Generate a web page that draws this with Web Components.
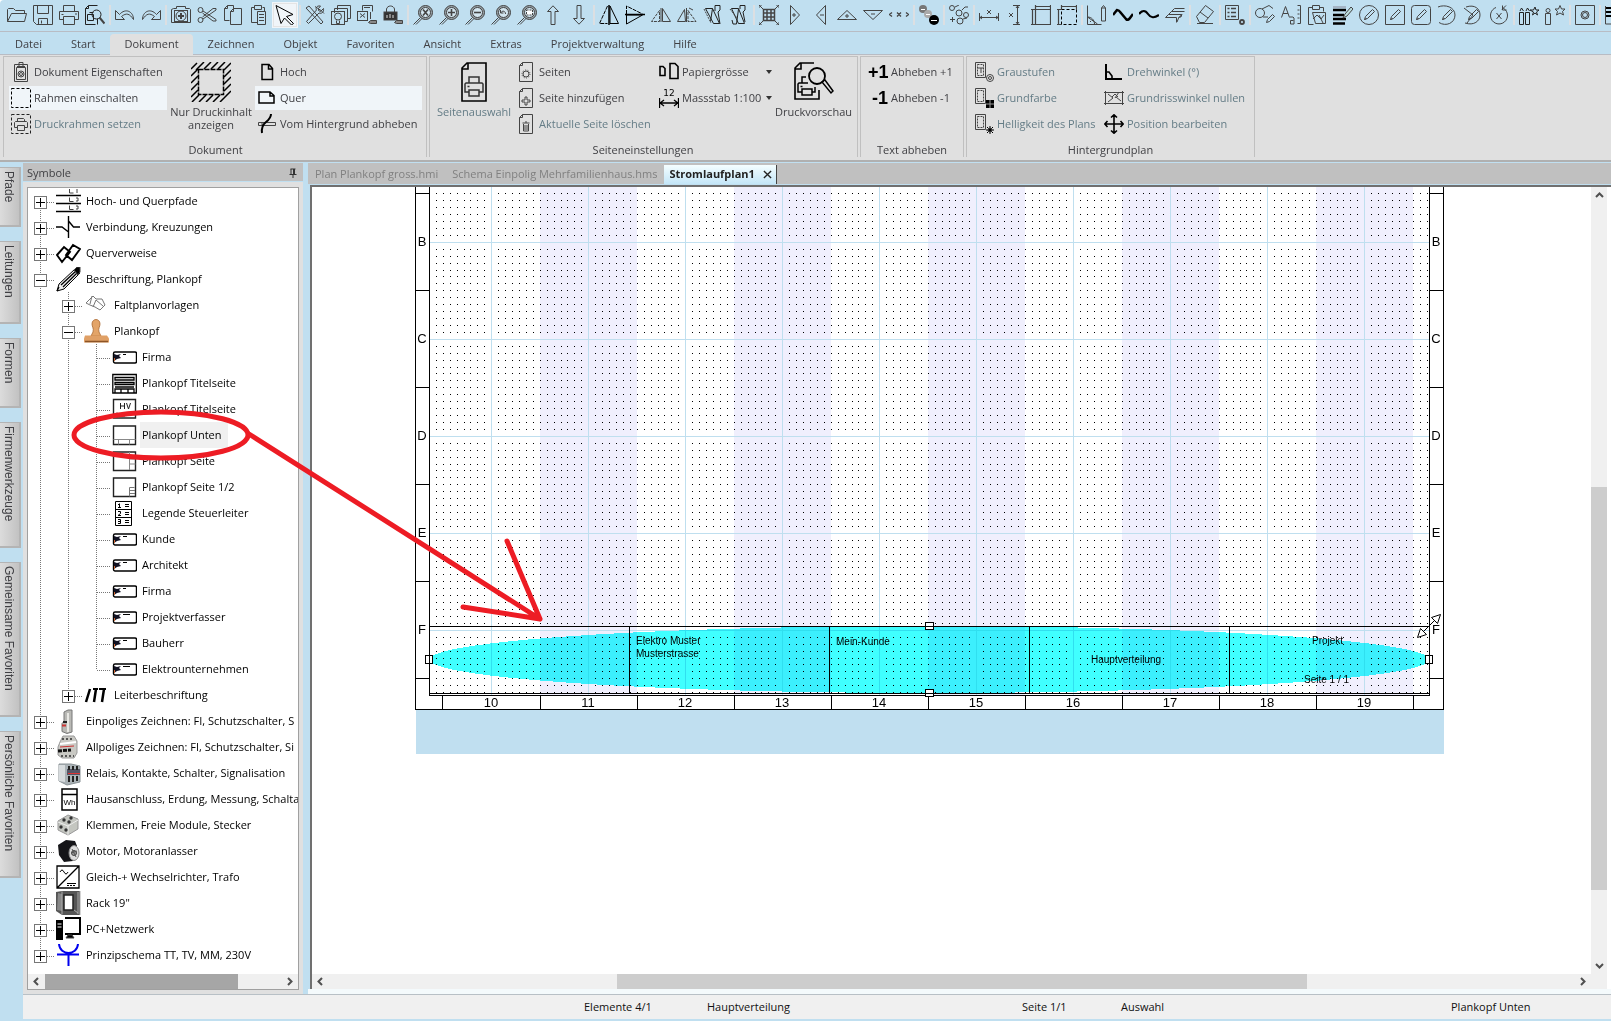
<!DOCTYPE html>
<html lang="de">
<head>
<meta charset="utf-8">
<title>Stromlaufplan1</title>
<style>
html,body{margin:0;height:100%;overflow:hidden;background:#fff}
body{font:11px/14px "Open Sans","Noto Sans",sans-serif;color:#404044;
--sky:#c0dff0;--panel:#e0e0e0;--bar:#c0c0c0;--line:#b8bcc4}
</style>
</head>
<body>
<cad-app></cad-app>
<script>
const define=(name,render)=>customElements.define(name,class extends HTMLElement{
  connectedCallback(){
    if(this.shadowRoot)return;
    this.attachShadow({mode:'open'}).innerHTML=render(this);
  }
});
const RESET='*{box-sizing:border-box}button{font:inherit;color:inherit;background:none;border:0;padding:0;margin:0;text-align:left}';

/* ---------- icon library: 20 x 20 unless a view box is given ---------- */
const mag='<circle cx="12.500" cy="7.500" r="7" fill="#98a2a8"/><circle cx="12.500" cy="7.500" r="5" fill="#d3e6f0"/><path d="M7.500 12.500L.5 19.500M9 13.500l-6 6"/>';
const miniDoc='<path d="M1.500.5h10v15h-10z"/><path d="M3.500 2.500h6v11h-6z" stroke-dasharray="2 1"/>';
const pen='<path d="M5.500 14.500l1-3 7-7 2 2-7 7zM5.500 14.500l2-1"/>';
const page='<path d="M6.500 .5h10v19h-13v-16zM3.500 3.500h3v-3"/>';
const card=w=>`<rect x="1.500" y="7" width="23" height="11" rx="1.500" stroke="#000" stroke-width="1.400"/><path d="M2 9l3 1 4-1-2 2 2 2-4 1-3 2z" fill="#112" stroke="none"/><path d="M2.500 13v3" stroke="#c63"/><path d="M11 9.500h${w}" stroke="#000"/>`;
const ICONS={
open:'<path d="M.5 16.500v-12l1-1h5l2 2h9v3M.5 16.500l4-8h15l-2 8z"/>',
save:'<path d="M.5.5h19v19h-16l-3-3zM4.500.5v8h11v-8M5.500 19.500v-6h9v6M8.500 15.500v3"/>',
print:'<path d="M4.500 6.500v-6h11v6M4.500 14.500h-4v-8h19v8h-4M4.500 11.500h11v8h-11zM2.500 9.500h2M16 9h2"/>',
preview:'<path d="M10.500 19.500h-10v-16l3-3h9M.5 3.500h3v-3M12.500 14v5.500M2.500 9.500h6v6h-6zM4.500 7.500h4" stroke="#222"/><circle cx="11.500" cy="9.500" r="4.500" stroke="#222"/><path d="M14.500 12.500l5 6" stroke-width="2"/>',
undo:'<path d="M.5 5.500v9h9l-3-3c5-4 8-3 12 3 0-8-8-12-14-5z"/>',
redo:'<path d="M19.500 5.500v9h-9l3-3c-5-4-8-3-12 3 0-8 8-12 14-5z"/>',
shot:'<path d="M.5 4.500l2-1h3v-2h9v2h4l1 1v13h-19z"/><rect x="3.500" y="5.500" width="13" height="11"/><circle cx="10" cy="11" r="5"/><path d="M10 8v6M7 11h6" stroke-width="2"/>',
cut:'<circle cx="3.500" cy="5" r="2.500"/><circle cx="3.500" cy="15" r="2.500"/><path d="M6 6l13 8.500v1.500h-3L5.500 8M6 14l13-9v-1.500h-3L5.500 12"/>',
copy:'<path d="M6.500 15.500h-5v-12l3-3h6v3M1.500 3.500h3v-3M7.500 6.500l3-3h8v16h-11zM7.500 6.500h3v-3"/>',
paste:'<path d="M8.500 17.500h-6v-15h3M13.500 2.500h2v4M5.500.5h7v4h-7zM8.500 6.500h8v13h-8zM10 9.500h5M10 12.500h5M10 15.500h5"/>',
pointer:'<path d="M1 .5l17 9-6.500 2 7 7-2 1.500-7-7L6 18.500z" stroke="#000"/>',
tools:'<path d="M1 3l3-2 14 16-2 2zM18.500 3.500l-3 3-2-1 0-2 2-2.500c-4-.5-5 2-4 4L1.500 16.500l2 2L14 8c3 1 5-1 4.500-4.500zM10 1.500l6 4 3 3" />',
layers:'<path d="M6.500 5v-4.500h13v13h-3M3.500 8v-4.500h13v13h-3"/><rect x=".5" y="6.500" width="13" height="13"/><circle cx="7" cy="11.500" r="3.500"/><path d="M5.500 15.500v3h3v-3"/>',
save2:'<path d="M5.500 5.500v-5h10v6M7 2.500h6"/><rect x=".5" y="6.500" width="10" height="9"/><path d="M3 12.500l5-4M3 8.500l5 4M13.500 7v7"/><path d="M11.500 17.500l2-2h6v3h-6z" fill="#888"/>',
lock:'<path d="M3.500 7v-3c1-4 7-4 8 0v3" /><rect x="1" y="7" width="13" height="8" fill="#333"/><path d="M4 10v3M7 9v4M10 10v3" stroke="#ddd"/><path d="M11.500 17.500l2-2h6v3h-6z" fill="#888"/>',
zx:mag+'<path d="M10 4.500l5 6M15 4.500l-5 6" stroke-width="1.600"/>',
zp:mag+'<path d="M12.500 4v7M9 7.500h7" stroke-width="1.600"/>',
zm:mag+'<path d="M9 7.500h7" stroke-width="1.600"/>',
zu:mag+'<path d="M9.500 5v3h3M9.500 8c2-3 5-2 5 1"/>',
zd:mag+'<rect x="9.500" y="5" width="6" height="5" fill="#fff" stroke-dasharray="2 1"/>',
up:'<path d="M10 .8l5.500 5.700h-3.500v13h-4v-13H4.500z"/>',
down:'<path d="M10 19.200l5.500-5.700h-3.500v-13h-4v13H4.500z"/>',
flipH:'<path d="M8.500 1L.5 18.500h8" stroke="#000" stroke-dasharray="4 1"/><path d="M11 1l8.500 17.500H11z" stroke="#000"/><path d="M10 0v20" stroke="#000" stroke-width="1.500"/>',
flipV:'<path d="M1.500 9V1l16 8" stroke="#000" stroke-dasharray="4 1"/><path d="M1.500 10v9l16-9z" stroke="#000"/><path d="M0 9.500h20" stroke="#000" stroke-width="1.500"/>',
fl2:'<path d="M8.500 5.500l-8 11h8z" stroke-dasharray="3 1"/><path d="M11.500 3.500l8 13h-8zM10 3v14"/>',
fl3:'<path d="M7.500 4.500l-7 12h8z"/><path d="M11 5.500l8 11h-8z" stroke-dasharray="3 1"/><path d="M9.500 3v14M12 3l4 2"/>',
fl4:'<path d="M2.500 3.500h7l7 15h-6zM9.500 3.500l-2 13M12 6V.5h5V5l-2 2 2 12" stroke="#222"/><path d="M1 4l7 14" stroke-dasharray="2 1"/>',
fl5:'<path d="M2.500 3.500h7l6 15h-6zM11 4V.5h5V5l-2 2 2 10M9.500 4l-2 15H4l-1-4" stroke="#222"/><path d="M1 4l7 9" stroke-dasharray="2 1"/>',
array:'<path d="M0 0l4 4M20 0l-4 4M0 20l4-4M20 20l-4-4M0 3V0h3M17 0h3v3M0 17v3h3M17 20h3v-3"/><path d="M4.500 4.500h11v11h-11zM8 4.500v11M12 4.500v11M4.500 8h11M4.500 12h11" stroke-width="1.500"/>',
tr:'<path d="M5.500.5l9 9.500-9 9.500zM7 10h4M9 8v4"/>',
tl:'<path d="M14.500.5l-9 9.500 9 9.500zM9 10h4"/>',
tu:'<path d="M.5 14.500l9.500-9 9.500 9zM8 11h4M10 9v4"/>',
td:'<path d="M.5 5.500l9.500 9 9.500-9zM8 9h4"/>',
xx:'<path d="M3 7.500L.5 9.500 3 11.500M17 7.500l2.500 2-2.500 2M8 7.500l4 4M12 7.500l-4 4" stroke-width="1.300"/>',
balls:'<g stroke="none"><circle cx="4" cy="4" r="4" fill="#777"/><circle cx="9" cy="9" r="4" fill="#aaa"/><circle cx="15" cy="15" r="5" fill="#000"/></g><path d="M12 15.500h6M2 4.500h4M7 9.500h4" stroke="#fff"/>',
nodes:'<circle cx="3" cy="3" r="2.500"/><circle cx="10" cy="8" r="3"/><circle cx="17" cy="10" r="2.500"/><circle cx="11" cy="16" r="3"/><path d="M6 2l4-2M13 5l3-3h3M1 14.500h5M3.500 12v5M14 14l4-1"/>',
dimH:'<path d="M.5 8v8M19.500 8v8M1 12.500h18M3 11l-2 1.500L3 14M17 11l2 1.500L17 14M8 5l4 4M12 5L8 9"/>',
dimV:'<path d="M8 .5h7M8 19.500h7M12.500 1v18M11 3l1.500-2L14 3M11 17l1.500 2L14 17M4 8l4 4M8 8l-4 4"/>',
dimBox:'<path d="M4.500 4.500h15v15h-15zM4.500 1.500h15M1.500 4.500v15M0 4.500h5M0 19.500h5M4.500 0v5M19.500 0v5" stroke-width="1.200"/>',
dimBox2:'<path d="M4.500 4.500h15v15h-15z" stroke="#000" stroke-dasharray="3 2"/><path d="M4.500 1.500h15M1.500 4.500v15M0 4.500h5M0 19.500h5M4.500 0v5M19.500 0v5" stroke-width="1.200"/>',
angle:'<path d="M.5.5v19h14M.5 12c4 0 7 3 7 7M.5 12l10 7M3 16.500h1M14.500 3l2-2.500 2 2.500v13h-4zM14.500 3h4"/>',
wave:'<path d="M0 10l4-5q2 0 4 3l5 6q2 2 4-1l3-4" stroke="#000" stroke-width="2.500"/>',
wave2:'<path d="M0 9q5-6 9 0t11 1" stroke="#000" stroke-width="2.200"/>',
offset:'<path d="M.5 12.500l3-3M3.500 9.500h13M.5 12.500h11v5M3.500 9.500l3-3h13M6.500 6.500l3-3h10M12 17l2-5h2l1-3M14.500 12.500l2-3"/>',
erase:'<path d="M1.500 11.500l9-11 8 6-9 11h-5zM5 7l8 6M2 18.500h16"/>',
list:'<path d="M.5.5h13v14h-13z"/><path d="M2.500 3.500h2M6 3.500h5M2.500 7.500h2M6 7.500h5M2.500 11.500h2M6 11.500h5" stroke-width="1.500"/><circle cx="17" cy="17" r="2" stroke-width="1.800"/>',
shapes:'<circle cx="5" cy="8" r="4.500"/><path d="M7 4l7-3.500 4 3M8 12h5M11.500 17.500l1-3 5-5 2 2-5 5z"/>',
type:'<path d="M.5 12.500l4-11 4 11M2 8.500h5M9 12h3l1 1v6h-3.500v-3.500h3M16.500.5h3v18h-3M16.500 5h2M16.500 9h2M16.500 13h2"/>',
clip:'<path d="M6.500 19.500h-5v-17h4M12.500 2.500h4v4M5.500.5h7v4h-7zM5.500 7.500h13v11h-10zM6 14l4-4 4 4 3-4M12 10l4 8"/>',
hatch:'<path d="M0 2h13" stroke="#889"/><path d="M0 5h13M0 10h11M0 14h13M0 18.500h12" stroke="#000" stroke-width="2.500"/><path d="M10 13l2-4 6-7 2 2-6 7z" fill="#bdd"/>',
pc:'<circle cx="10" cy="10" r="9.500"/>'+pen,
ps:'<path d="M.5.5h19v19H.5z"/>'+pen,
pr:'<rect x=".5" y=".5" width="19" height="19" rx="3"/>'+pen,
pa:'<path d="M1 2c7-3 17 0 17 8s-9 12-16 7.500"/>'+pen,
pp:'<path d="M3 2c9-3 14 2 14 8s-6 11-15 8M1 3l9 7-6 8"/>'+pen,
rot:'<path d="M7 2.500a8.500 8.500 0 1 0 6 0M13 4.500l4-4M13.500 .5v4.500h4M7.500 8l5 6M12.500 8l-5 6"/>',
fav1:'<path d="M.5 7.500h4v12h-4zM6.500 7.500h4v12h-4zM1 6l1.500-3L4.500 6M7 6l1.500-3L10.500 6M16 2l1 3h3l-2.500 2 1 3-2.500-2-2.500 2 1-3L11 5h3.500z" stroke="#222"/>',
fav2:'<path d="M.5 8.500h5v11h-5zM15 .5l1.500 3.500H20l-2.500 2.500 1 3.500-3.500-2-3.500 2 1-3.500L10 4h3.500z"/><circle cx="3" cy="5.500" r="2"/>',
gear:'<path d="M.5.5h19v19H.5z"/><circle cx="10" cy="10" r="4"/><circle cx="10" cy="10" r="2.500"/>',
more:'<path d="M.5 3h19M.5 7h19M.5 11h19" stroke="#000" stroke-width="2"/><path d="M.5 1v18h19"/>',
/* ribbon */
props:'<path d="M3.500 2.500h13v17h-13zM8 4.500V.5h4v4zM6 4.500h8"/><path d="M5.500 5.500h9v12h-9z"/><circle cx="10" cy="12" r="3"/><circle cx="10" cy="12" r="1.500"/>',
frame:'<path d="M.5.5h19v19H.5z" stroke="#000" stroke-dasharray="3 2"/>',
frameP:'<path d="M.5.5h19v19H.5z" stroke="#222" stroke-dasharray="3 2"/><path d="M6.500 8V4.500h6l1 1V8M6.500 13.500h-3V8.500l1-1h11l1 1v5h-3M6.500 11.500h7v5h-7z"/>',
content:['0 0 40 40','<path d="M7.500 7.500h25v25h-25z" stroke="#000" stroke-width="1.500" stroke-dasharray="5 1"/><path d="M0 7l6-6M5 8l8-8M13 7l7-7M20 7l7-7M27 7l7-7M33 8l7-7M33 15l7-7M33 22l7-7M33 29l7-7M33 36l7-7M0 14l7-7M0 21l7-7M0 28l7-7M0 35l7-7M1 40l7-7M8 40l7-7M15 40l7-7M22 40l7-7M29 40l7-7" stroke="#000" stroke-width="1.500"/>'],
portrait:'<path d="M5 2.500h7l3.500 4v11H5zM11.500 3v4h4" stroke="#000" stroke-width="1.500"/>',
land:'<path d="M2 4h11l4 3.500V15H2zM13 4v4h4" stroke="#000" stroke-width="1.500"/>',
lift:'<path d="M1.500 8.500h17v3h-17zM5 8.500v3"/><path d="M14 0q0 4-5 8T5 19" stroke="#000" stroke-width="2"/>',
pagesel:['0 0 26 40','<path d="M6 1h19v38H1V6zM1 7h6V1" stroke="#000" stroke-width="1.600"/><path d="M8 21v-6h10v6M8 30H4v-8l1-1h16l1 1v8h-4M8 28h10v6H8zM6.500 24.500h2" stroke-width="1.500" stroke="#333"/>'],
pgGear:page+'<circle cx="10" cy="12" r="3"/><circle cx="10" cy="12" r="4" stroke-dasharray="1 1.500"/>',
pgPlus:page+'<path d="M9 9h2v3h3v2h-3v3H9v-3H6v-2h3z"/>',
pgDel:page+'<path d="M6.500 9h7M9 8h2M7.500 10v7h5v-7M9 11v5M11 11v5"/>',
paper:'<path d="M1 4.500h3l2 2v7H1zM11 1.500h5l3 3v12h-8z" stroke="#000" stroke-width="1.600"/>',
preview2:['0 0 40 40','<path d="M20 1H6L1 6v31h24V28M1 7h6V1" stroke="#000" stroke-width="1.600"/><path d="M12 15H8v6M8 30H4v-8l1-1h9M8 27h10v6H8zM18 30h3v-5M6.500 24.500h2" stroke="#000" stroke-width="1.500"/><circle cx="23" cy="14" r="8" stroke="#000" stroke-width="1.800"/><path d="M28 20l3-2 8 11-2 2z" stroke="#000" stroke-width="1.500"/>'],
gray:miniDoc+'<path d="M3.500 6h6M7 6v5"/><circle cx="16" cy="16" r="3.500"/><circle cx="16" cy="16" r="1.500"/>',
color:miniDoc+'<path d="M12 12h8v8h-8z" fill="#000" stroke="none"/><path d="M12 16h8M16 12v8" stroke="#999"/>',
bright:miniDoc+'<path d="M16 12v8M12 16h8M13 13l6 6M19 13l-6 6" stroke="#000"/><circle cx="16" cy="16" r="2" fill="#000"/>',
rotang:'<path d="M2 2v15h16" stroke="#000" stroke-width="2"/><path d="M3 10h2l3 4v3" stroke="#000" stroke-width="1.600"/>',
ground:'<path d="M0 4.500h20M0 15.500h20M1.500 3v14M18.500 3v14M4 6l5 4-5 4M8 9l3-3 3 3M12 9l5 4M15 4l-4 6"/>',
move:'<path d="M10 1v18M1 10h18M7 3.500L10 .8l3 2.700M7 16.500l3 2.700 3-2.700M3.500 7L.8 10l2.700 3M16.500 7l2.700 3-2.700 3" stroke="#000" stroke-width="1.600"/>',
pin:['0 0 8 10','<path d="M1.500 1h5M2 1v5M5.500 1v5M4.500 1v5M.5 6.500h7M4 6v4" stroke="#333"/>'],
/* symbol tree, 25 x 25 */
t_path:['0 0 25 25','<path d="M0 6.500h25M0 14.500h25M0 22.500h25" stroke="#000" stroke-width="1.500"/><path d="M13.500 0v4h4M13.500 8.500v4h4M13.500 16.500v4h4M21 0v4M20 9h2v3h-2M20 17h2v3h-2" stroke="#444"/>'],
t_cross:['0 0 25 25','<path d="M12.500 1v22M0 12h6l6.500 5M12.500 6l5 6H24" stroke="#000" stroke-width="1.400"/>'],
t_ref:['0 0 25 25','<path d="M1 14l7-8 6 5-8 10zM10 14l7-10 7 4-8 11z" stroke="#000" stroke-width="1.900"/>'],
t_pen:['0 0 25 25','<path d="M1 24l2-7L19 2l5 4L8 22z" fill="#eee" stroke="#000"/><path d="M5 18L20 4M7 20L22 5M1 24l2-4" stroke="#000" stroke-width="1.300"/><path d="M18 3l3-3h3v5l-2 3z" fill="#000"/>'],
t_fold:['0 0 25 25','<path d="M2 10l7-7 3 3 6 0 3 6-5 5-5-3-5-2zM8 3l-2 8M12 7l-3 7M12 7l7 6" stroke="#777"/>'],
t_stamp:['0 0 25 25','<path d="M8 5c0-6 8-6 8 0 0 3-2 4-1 8l2 4H7l2-4c1-4-1-5-1-8z" fill="#e3a468" stroke="#a9672f" stroke-width=".8"/><path d="M1 16.500h22l2 3v4H0v-4z" fill="#e0a066" stroke="none"/><path d="M1 22.500h23" stroke="#8d5426" stroke-width="1.500"/>'],
t_f2:['0 0 25 25',card(3)],t_f3:['0 0 25 25',card(4)],t_f5:['0 0 25 25',card(7)],
t_title:['0 0 25 25','<path d="M.8 3.500h23.500v18.500H.8zM3 6.500h19v2.500H3zM3 11.500h19v2H3zM3 16h19M3 22v-4h19v4M9 18v4M16 18v4" stroke="#000" stroke-width="1.300"/>'],
t_hv:['0 0 25 25','<path d="M1.500 2.500h22v18.500h-22z" stroke="#222" stroke-width="1.400"/><path d="M8.500 6v6M12.500 6v6M8.500 9h4M14.500 6l2 6 2-6M5 15.500v5M10 19h3M15 15v4M18 15v4" stroke="#222"/>'],
t_bottom:['0 0 25 25','<path d="M1.500 3h22v18.500h-22z" stroke="#222" stroke-width="1.400"/><path d="M1.500 16.500h22M6.500 16.500v5M17.500 16.500v5" stroke="#888"/>'],
t_side:['0 0 25 25','<path d="M1.500 3h22v18.500h-22z" stroke="#222" stroke-width="1.400"/><path d="M17.500 3v18M17.500 10h6M17.500 15h6" stroke="#888"/>'],
t_side2:['0 0 25 25','<path d="M1.500 3h22v18.500h-22z" stroke="#222" stroke-width="1.400"/><path d="M17.500 12.500v9M17.500 12.500h5M18 15.500h5M18 18.500h5" stroke="#777"/>'],
t_leg:['0 0 25 25','<path d="M3.500.5h16v24h-16zM3.500 8.500h16M3.500 16.500h16" stroke="#000"/><path d="M7.500 2.500v4M6 3.500h1.500M6 6.500h3M6 10.500h2.500v2l-2.500 2h3M6 18.500h2.500v4h-2.500M6 20.500h2.500M13 3.500h4M13 5.500h4M13 11.500h4M13 13.500h4M13 19.500h4M13 21.500h4" stroke="#000"/>'],
t_cond:['0 0 25 25','<path d="M2 19l4-13M10 19l2-13M18 19l2-13" stroke="#000" stroke-width="2.500"/><path d="M9 6h5M15 6h7" stroke="#000" stroke-width="2"/>'],
t_mcb:['0 0 25 25','<path d="M8 3l4-2h4v22l-5 1.500-5-2v-8l2-2z" fill="#b9b9b5" stroke="#777"/><path d="M12 4v19" stroke="#e8e8e4" stroke-width="2"/><path d="M6 16.500h4" stroke="#c33" stroke-width="2"/><path d="M7 13h4" stroke="#222" stroke-width="2"/>'],
t_mcb3:['0 0 25 25','<path d="M4 7l3-6h11l3 5v12l-3 5-12 0-4-3V12z" fill="#c9c9c4" stroke="#999"/><path d="M6 4h12" stroke="#555" stroke-width="2" stroke-dasharray="2 2"/><path d="M4 9l16-2" stroke="#fff" stroke-width="2"/><path d="M4 12l14-1" stroke="#c33"/><path d="M2 16l13-1" stroke="#111" stroke-width="3" stroke-dasharray="4 1"/><path d="M5 21h13" stroke="#555" stroke-width="2" stroke-dasharray="2 2"/>'],
t_relay:['0 0 25 25','<path d="M3 3h12l9 2v16l-13 3-8-4z" fill="#aab2b6" stroke="#8a9296"/><path d="M3 4h6v17l-6-1z" fill="#d8dcde" stroke="none"/><path d="M11 8h13v6H11z" fill="#556" stroke="none"/><path d="M12 12.500h12" stroke="#d33"/><path d="M13 5v4M17 5v4M21 5v4M13 15v6M17 15v6M21 15v5" stroke="#222" stroke-width="2"/>'],
t_wh:['0 0 25 25','<path d="M6 2h15v21H6zM6 7.500h15" stroke="#000" stroke-width="1.500"/><text x="13.500" y="18" font-size="8" font-family="Liberation Sans,sans-serif" text-anchor="middle" fill="#000" stroke="none">Wh</text>'],
t_clamp:['0 0 25 25','<path d="M2 8l10-6 10 4v10l-10 6-10-5z" fill="#c4c6c0" stroke="#999"/><path d="M2 9l10 4 10-6M12 13v9" stroke="#eee"/><g fill="#333" stroke="none"><circle cx="8" cy="7" r="1.700"/><circle cx="13" cy="9" r="1.700"/><circle cx="15" cy="5" r="1.700"/><circle cx="5" cy="14" r="1.700"/><circle cx="10" cy="17" r="1.700"/></g>'],
t_motor:['0 0 25 25','<path d="M2 6l8-5 9 1 2 5-4 15-9 1-5-7z" fill="#151518" stroke="none"/><ellipse cx="18" cy="14" rx="5" ry="7.500" fill="#ddd" stroke="#888"/><circle cx="18" cy="14" r="2.500" fill="#999"/><path d="M15 14l6-2M16 10l4 8" stroke="#555"/>'],
t_inv:['0 0 25 25','<path d="M1 1h22v22H1zM1 23L23 1" stroke="#000" stroke-width="1.300"/><path d="M4 7q2-4 4 0t4 0M11 18.500h9" stroke="#000"/><path d="M11 20.500h9" stroke="#000" stroke-dasharray="2 1"/>'],
t_rack:['0 0 25 25','<path d="M0 1l6-1h18v24H6l-6-4z" fill="#555" stroke="none"/><path d="M2 2l4 1v17l-5-1z" fill="#888" stroke="none"/><path d="M8 4h9v15H8z" fill="#fff" stroke="#222" stroke-width="1.500"/><path d="M18 19l4 3" stroke="#aaa"/><path d="M6 .5v23M24 0v24M22 1v22" stroke="#aaa"/>'],
t_pc:['0 0 25 25','<path d="M0 3h7v20H0z" fill="#000" stroke="none"/><path d="M1.500 7h4M1.500 10h4" stroke="#fff"/><path d="M9 1h15v16H9" stroke="#000" stroke-width="2"/><path d="M10 21h8l-2-3h-4z" fill="#000"/>'],
t_tt:['0 0 25 25','<path d="M3 1c1 12 18 12 19 0M1 11.500h22M12.500 11v12" stroke="#00e" stroke-width="2"/>']
};
define('cad-icon',el=>{
  const d=ICONS[el.getAttribute('name')];
  const [box,body]=Array.isArray(d)?d:['0 0 20 20',d];
  const [, ,w,h]=box.split(' ');
  return `<style>:host{display:block;flex:none}svg{display:block;fill:none;stroke:#444;stroke-width:1}</style><svg width="${w}" height="${h}" viewBox="${box}" aria-hidden="true">${body}</svg>`;
});

/* ---------- quick toolbar ---------- */
const TOOLS='open save print preview|undo redo|shot cut copy paste pointer|tools layers save2 lock|zx zp zm zu zd up down|flipH flipV fl2 fl3 fl4 fl5|array tr tl tu td xx|balls|nodes|dimH dimV dimBox dimBox2|angle wave wave2 offset|erase|list|shapes type clip hatch pc ps pr pa pp rot|fav1 fav2|gear|more';
define('cad-toolbar',()=>`<style>${RESET}
:host{display:flex;height:30px;padding:0 0 1px 4px;overflow:hidden;flex:none;align-items:center;border-bottom:1px solid var(--line);box-sizing:content-box}
button{width:26px;height:26px;flex:none;display:grid;place-items:center}
button.on{background:#f0f5f9;outline:1px solid #e4e4e4;outline-offset:-2px}
i{flex:none;width:2px;height:20px;margin:0 1px;background:#dcdfe2}</style>`+
TOOLS.split('|').map(g=>g.split(' ').map(n=>`<button aria-label="${n}" class="${n==='pointer'?'on':''}"><cad-icon name="${n}"></cad-icon></button>`).join('')).join('<i></i>'));

define('cad-menu',()=>`<style>${RESET}
:host{display:flex;gap:1px;height:22px;flex:none;padding-left:1px;border-bottom:1px solid var(--line);box-sizing:content-box}
button{padding:0 14px;height:20px;margin-top:2px}
.on{background:var(--panel);border-radius:4px 4px 0 0;height:22px;margin-bottom:-1px;padding-bottom:2px}</style>`+
['Datei','Start','Dokument','Zeichnen','Objekt','Favoriten','Ansicht','Extras','Projektverwaltung','Hilfe'].map(t=>`<button class="${t==='Dokument'?'on':''}">${t}</button>`).join(''));

/* ---------- ribbon ---------- */
define('ribbon-button',el=>{
  const a=n=>el.getAttribute(n), glyph=a('glyph');
  const icon=glyph?`<b>${glyph}</b>`:a('icon')==='scale'?'<span class="scale"><small>12</small><svg width="20" height="10" viewBox="0 0 20 10" aria-hidden="true"><path d="M.5 0v10M19.500 0v10M1 5h18M5 2L1 5l4 3M15 2l4 3-4 3" fill="none" stroke="#000" stroke-width="1.300"/></svg></span>':`<span class="ic"><cad-icon name="${a('icon')}"></cad-icon></span>`;
  return `<style>${RESET}
:host{display:flex}
button{display:flex;align-items:center;gap:3px;height:24px;margin:1px 0;width:100%;white-space:nowrap;padding:0 var(--pad,2px)}
:host([off]) button{color:#647c86}:host([on]) button{background:#f0f5f9}
:host([big]) button{flex-direction:column;height:auto;gap:3px;margin:3px 0 0;text-align:center;padding:0;line-height:13px}
b{width:20px;flex:none;font:bold 18px/20px "Liberation Sans",sans-serif;color:#000;text-align:right}
.ic{min-width:20px;display:grid;place-items:center}
.scale{width:20px;display:flex;flex-direction:column;align-items:center}
small{font:9px/9px "DejaVu Sans",sans-serif;color:#000}
.arr{border:3px solid transparent;border-top:4px solid #333;border-bottom:0;margin-left:auto}</style>
<button>${icon}<span><slot></slot></span>${el.hasAttribute('menu')?'<span class="arr"></span>':''}</button>`;
});
define('ribbon-group',el=>`<style>
:host{display:flex;flex-direction:column;border:1px solid var(--bar);border-bottom:0;height:101px;box-sizing:border-box;padding:2px var(--right,3px) 0 var(--left,3px);flex:none}
.cols{display:flex;flex:1;min-height:0}.title{text-align:center;padding-top:6px;flex:none}</style>
<div class="cols"><slot></slot></div><div class="title">${el.getAttribute('label')}</div>`);
define('ribbon-column',el=>`<style>:host{display:block;flex:none;width:${el.getAttribute('w')}px}</style><slot></slot>`);
const rb=(icon,text,flags='')=>`<ribbon-button icon="${icon}" ${flags}>${text}</ribbon-button>`;
const col=(w,...items)=>`<ribbon-column w="${w}">${items.join('')}</ribbon-column>`;
define('cad-ribbon',()=>`<style>
:host{display:flex;gap:2px;height:104px;padding:1px 0 0 3px;background:var(--panel);border-bottom:2px solid #b0b0b0;margin-bottom:1px;box-sizing:content-box;flex:none;overflow:hidden}
.a{--left:5px;--right:4px}.b{--pad:0px;--left:2px}.c{--left:4px;--right:4px;--pad:3px}.m{--pad:1px}</style>
<ribbon-group label="Dokument" class="a">${
col(158,rb('props','Dokument Eigenschaften'),rb('frame','Rahmen einschalten','on'),rb('frameP','Druckrahmen setzen','off'))+
col(88,rb('content','Nur Druckinhalt<br>anzeigen','big'))+
col(167,rb('portrait','Hoch'),rb('land','Quer','on'),rb('lift','Vom Hintergrund abheben'))}</ribbon-group>
<ribbon-group label="Seiteneinstellungen" class="b">${
col(84,rb('pagesel','Seitenauswahl','big off'))+
col(142,rb('pgGear','Seiten'),rb('pgPlus','Seite hinzufügen'),rb('pgDel','Aktuelle Seite löschen','off'))}
<ribbon-column w="115" class="m">${rb('paper','Papiergrösse','menu')+rb('scale','Massstab 1:100','menu')}</ribbon-column>${
col(81,rb('preview2','Druckvorschau','big'))}</ribbon-group>
<ribbon-group label="Text abheben" class="c">${
col(94,rb('','Abheben +1','glyph="+1"'),rb('','Abheben -1','glyph="-1"'))}</ribbon-group>
<ribbon-group label="Hintergrundplan" class="c">${
col(130,rb('gray','Graustufen','off'),rb('color','Grundfarbe','off'),rb('bright','Helligkeit des Plans','off'))+
col(149,rb('rotang','Drehwinkel (°)','off'),rb('ground','Grundrisswinkel nullen','off'),rb('move','Position bearbeiten','off'))}</ribbon-group>`);

/* ---------- left rail ---------- */
define('cad-rail',()=>`<style>${RESET}
:host{display:flex;flex-direction:column;gap:14px;width:23px;padding-top:4px;flex:none}
button{writing-mode:vertical-rl;width:21px;padding:3px 1px 0 0;border:solid #b4b4b4;border-width:1px 2px 2px 0;background:linear-gradient(90deg,#dcdcdc,#c2c2c2);font:12px/18px "Liberation Sans",sans-serif;flex:none}</style>`+
[['Pfade',60],['Leitungen',83],['Formen',70],['Firmenwerkzeuge',126],['Gemeinsame Favoriten',155],['Persönliche Favoriten',147]].map(([t,h])=>`<button style="height:${h}px">${t}</button>`).join(''));

/* ---------- scroll bar ---------- */
define('scroll-bar',el=>{
  const v=el.hasAttribute('vertical'),[pre,size,post]=el.getAttribute('parts').split(' ');
  const arrow=d=>`<button aria-label="scroll"><svg width="9" height="9" viewBox="0 0 9 9"><path d="${d}" fill="none" stroke="#505050" stroke-width="2"/></svg></button>`;
  return `<style>${RESET}
:host{display:flex;background:#f0f0f0;flex:none;${v?'flex-direction:column;width:16px':'height:15px'}}
button{flex:none;${v?'height:17px;width:100%':'width:17px;height:100%'};display:grid;place-items:center}
.t{background:var(--thumb,#cdcdcd)}</style>
${arrow(v?'M1 6l3.500-3.500L8 6':'M6 1L2.500 4.500 6 8')}<span style="flex:${pre}"></span><span class="t" style="flex:${size}"></span><span style="flex:${post}"></span>${arrow(v?'M1 3l3.500 3.500L8 3':'M3 1l3.500 3.500L3 8')}`;
});

/* ---------- symbol tree ---------- */
const TREE=[
[0,'+','path','Hoch- und Querpfade'],[0,'+','cross','Verbindung, Kreuzungen'],[0,'+','ref','Querverweise'],[0,'-','pen','Beschriftung, Plankopf'],
[1,'+','fold','Faltplanvorlagen'],[1,'-','stamp','Plankopf'],
[2,'','f2','Firma'],[2,'','title','Plankopf Titelseite'],[2,'','hv','Plankopf Titelseite'],[2,'','bottom','Plankopf Unten'],[2,'','side','Plankopf Seite'],[2,'','side2','Plankopf Seite 1/2'],[2,'','leg','Legende Steuerleiter'],[2,'','f3','Kunde'],[2,'','f3','Architekt'],[2,'','f2','Firma'],[2,'','f5','Projektverfasser'],[2,'','f3','Bauherr'],[2,'','f5','Elektrounternehmen'],
[1,'+','cond','Leiterbeschriftung'],
[0,'+','mcb','Einpoliges Zeichnen: FI, Schutzschalter, S'],[0,'+','mcb3','Allpoliges Zeichnen: FI, Schutzschalter, Si'],[0,'+','relay','Relais, Kontakte, Schalter, Signalisation'],[0,'+','wh','Hausanschluss, Erdung, Messung, Schalta'],[0,'+','clamp','Klemmen, Freie Module, Stecker'],[0,'+','motor','Motor, Motoranlasser'],[0,'+','inv','Gleich-+ Wechselrichter, Trafo'],[0,'+','rack','Rack 19"'],[0,'+','pc','PC+Netzwerk'],[0,'+','tt','Prinzipschema TT, TV, MM, 230V']];
const guides=i=>{
  const [lv,ex]=TREE[i];let out='';
  for(let l=0;l<=lv;l++){
    let next=false;
    for(let k=i+1;k<TREE.length&&TREE[k][0]>=l;k++)if(TREE[k][0]===l){next=true;break}
    let p='';
    if(l<lv){if(next)p='<path d="M12.500 0v26"/>'}
    else{
      p=(i?'<path d="M12.500 0v14"/>':'')+(next?'<path d="M12.500 14v12"/>':'')+'<path d="M13 14.500h14"/>';
      if(ex)p+=`<g stroke-dasharray="none"><rect x="6.500" y="8.500" width="12" height="12" fill="#fff"/><path stroke="#000" d="M8 14.500h9${ex==='+'?'M12.500 10v9':''}"/></g>`;
    }
    out+=`<svg width="28" height="26" viewBox="0 0 28 26" aria-hidden="true">${p}</svg>`;
  }
  return out;
};
define('symbol-tree',()=>`<style>
:host{display:block;flex:1;overflow:hidden;color:#000}
ul{margin:0;padding:0;list-style:none}
li{display:flex;height:26px;white-space:nowrap;align-items:center}
svg{flex:none;fill:none;stroke:#777;stroke-dasharray:1 1;shape-rendering:crispEdges}
cad-icon{width:28px}
span{line-height:26px;padding:0 0 0 2px}
li[aria-selected=true] span{background:#f0f0f0;padding-right:6px}</style><ul role="tree">`+
TREE.map((r,i)=>`<li role="treeitem" aria-selected="${r[3]==='Plankopf Unten'}">${guides(i)}<cad-icon name="t_${r[2]}"></cad-icon><span>${r[3]}</span></li>`).join('')+'</ul>');
define('symbol-panel',()=>`<style>
:host{display:flex;flex-direction:column;width:280px;flex:none}
header{display:flex;align-items:center;justify-content:space-between;background:var(--bar);height:18px;padding:1px 6px 0 4px;margin-bottom:1px;box-sizing:border-box}
.body{flex:1;display:flex;background:var(--panel);padding:5px 4px 4px;min-height:0}
.box{flex:1;display:flex;flex-direction:column;background:#fff;border:1px solid #a0a0a0;min-width:0}
scroll-bar{--thumb:#a6a6a6}</style>
<header>Symbole<cad-icon name="pin"></cad-icon></header>
<div class="body"><div class="box"><symbol-tree></symbol-tree><scroll-bar parts="0 193 43"></scroll-bar></div></div>`);

/* ---------- document area ---------- */
const T=97, X0=179, Y0=55;
const range=(n,f)=>Array.from({length:n},(_,i)=>f(i)).join('');
define('plan-sheet',()=>{
  const dx=[7,14,21,28,35,42,49,56,63,70,76,83,90], dy=[7,14,21,28,34,41,48,55,62,69,76,83,90];
  const dots=dy.map(y=>dx.map(x=>`<rect x="${x}" y="${y}" width="1" height="1"/>`).join('')).join('');
  return `<style>
:host{display:block;flex:1;min-width:0;overflow:hidden;background:#fff}
svg{display:block;font-family:"Liberation Sans",sans-serif}
.k{stroke:#000;fill:none}.b{stroke:#bfdfef}.h{fill:#fff;stroke:#000}.big{font-size:13px;text-anchor:middle}.s{font-size:10px}
ellipse{fill:#40ffff;mix-blend-mode:multiply}</style>
<svg width="1280" height="787" viewBox="0 0 1280 787">
<defs><pattern id="d" x="${X0}" y="${Y0}" width="${T}" height="${T}" patternUnits="userSpaceOnUse">${dots}</pattern></defs>
<g shape-rendering="crispEdges">
<rect x="0" y="0" width="1280" height="787" fill="#fff"/>
<rect x="104" y="523" width="1028" height="44" fill="#c0dff0"/>
${range(5,i=>`<rect x="${228+i*2*T}" y="0" width="${T}" height="508" fill="#f0effd"/>`)}
${range(10,i=>`<path class="b" d="M${X0+i*T+.5} 0v508"/>`)}
${range(5,i=>`<path class="b" d="M118 ${Y0+i*T+.5}h1000"/>`)}
<ellipse cx="617.500" cy="472.500" rx="500" ry="33.500"/>
<rect x="118" y="0" width="999" height="506" fill="url(#d)"/>
<path class="k" d="M103.500 0v522.500h1028V0M117.500 0v508.500h1000V0M117.500 439.500h1000M117.500 506.500h1000M317.500 439v67M517.500 439v67M717.500 439v67M917.500 439v67M130.500 508v14"/>
${range(6,i=>`<path class="k" d="M103 ${6.5+i*T}h14M1117 ${6.5+i*T}h14"/>`)}
${range(10,i=>`<path class="k" d="M${228.5+i*T} 508v14"/>`)}
<path class="h" d="M113.500 468.500h7v8h-7zM1113.500 468.500h7v8h-7zM613.500 435.500h8v7h-8zM613.500 502.500h8v7h-8z"/>
<path class="k" d="M117.500 468v8M1117.500 468v8M613 439.500h8M613 506.500h8"/>
</g>
${['B','C','D','E','F'].map((c,i)=>`<text class="big" x="110" y="${59+i*T}">${c}</text><text class="big" x="1124" y="${59+i*T}">${c}</text>`).join('')}
${range(10,i=>`<text class="big" x="${X0+i*T}" y="520">${10+i}</text>`)}
<g class="s"><text x="324" y="457">Elektro Muster</text><text x="324" y="470">Musterstrasse</text><text x="524" y="458">Mein-Kunde</text>
<text x="779" y="476">Hauptverteilung</text><text x="1000" y="457">Projekt</text><text x="992" y="496">Seite 1 / 1</text></g>
<path d="M1105.500 450.500l3-9 6 6zM1128.500 427.500l-3 9-6-6zM1111 445l11-11" fill="#fff" stroke="#000"/>
</svg>`;
});
define('doc-tab',el=>`<style>${RESET}
:host{display:block;color:#808080}
button{height:19px;padding:0 7px 1px;display:flex;align-items:center;gap:8px}
:host([active]) button{color:#222;font-weight:bold;background:linear-gradient(#f4feff,#c4e6f8);border-right:1px solid #444;padding:0 4px 1px 5px}
svg{stroke:#222;stroke-width:1.500}</style><button><slot></slot>${el.hasAttribute('active')?'<svg width="9" height="9" viewBox="0 0 10 10" aria-hidden="true"><path d="M1 1l8 8M9 1L1 9"/></svg>':''}</button>`);
define('doc-area',()=>`<style>
:host{display:flex;flex-direction:column;flex:1;min-width:0;margin-left:5px}
nav{display:flex;height:21px;background:var(--bar);padding:2px 0 0;box-sizing:border-box}
.frame{flex:1;display:flex;flex-direction:column;min-height:0;background:#fff;border:solid #707070;border-width:2px 0 0 2px;margin:1px 0 0 2px;padding-right:4px}
.row{flex:1;display:flex;min-height:0}
.edge{height:5px;background:#f4fafc}.low{display:flex;background:#f0f0f0;padding-right:16px}.low scroll-bar{flex:1}</style>
<nav><doc-tab>Plan Plankopf gross.hmi</doc-tab><doc-tab>Schema Einpolig Mehrfamilienhaus.hms</doc-tab><doc-tab active>Stromlaufplan1</doc-tab></nav>
<div class="frame"><div class="row"><plan-sheet></plan-sheet><scroll-bar vertical parts="283 403 67"></scroll-bar></div>
<div class="low"><scroll-bar parts="288 691 267"></scroll-bar></div></div><div class="edge"></div>`);

define('status-bar',()=>`<style>
:host{display:flex;height:25px;background:#f0f0f0;border-top:1px solid #b8c0c6;box-sizing:border-box;color:#111;flex:none;align-items:center}
span{flex:none}</style>
<span style="width:561px"></span><span style="width:123px">Elemente 4/1</span><span style="width:315px">Hauptverteilung</span><span style="width:99px">Seite 1/1</span><span style="width:330px">Auswahl</span><span>Plankopf Unten</span>`);

/* hand-drawn marker lying over the window */
define('red-marker',()=>`<style>:host{position:absolute;left:0;top:0;pointer-events:none}svg{display:block;fill:none;stroke:#ed1c24;stroke-width:5;stroke-linecap:round}</style>
<svg width="600" height="700" viewBox="0 0 600 700" aria-hidden="true"><ellipse cx="161" cy="435" rx="87" ry="23"/><path d="M249 434L540 619M507 541l33 78M463 607l77 12"/></svg>`);

define('cad-app',()=>`<style>
:host{display:flex;flex-direction:column;height:100vh;background:var(--sky);border-top-left-radius:4px;position:relative;overflow:hidden;box-sizing:border-box;padding-bottom:2px}
.main{flex:1;display:flex;min-height:0}.right{flex:1;display:flex;flex-direction:column;min-width:0}.panes{flex:1;display:flex;min-height:0}</style>
<cad-toolbar></cad-toolbar><cad-menu></cad-menu><cad-ribbon></cad-ribbon>
<div class="main"><cad-rail></cad-rail><div class="right"><div class="panes"><symbol-panel></symbol-panel><doc-area></doc-area></div><status-bar></status-bar></div></div>
<red-marker></red-marker>`);
</script>
</body>
</html>
